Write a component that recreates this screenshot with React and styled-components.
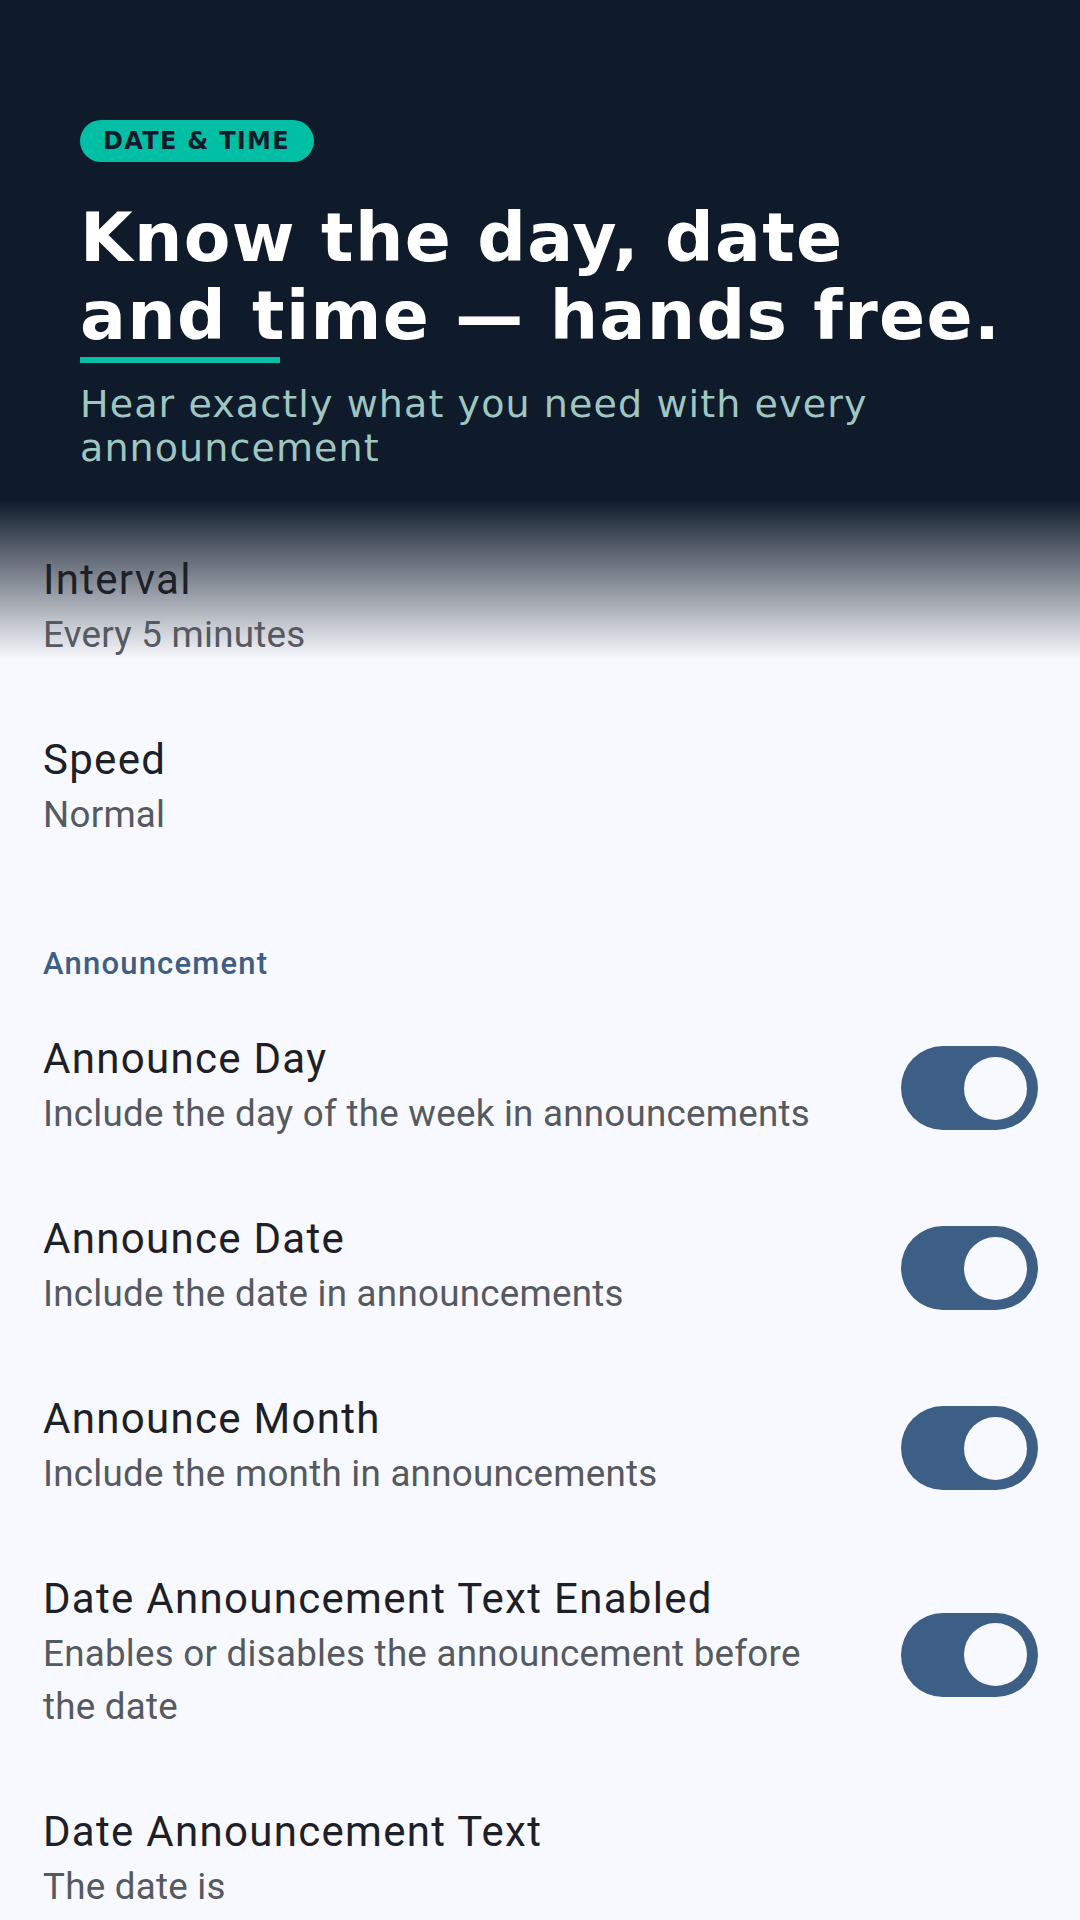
import React, { useState } from "react";
import styled, { createGlobalStyle } from "styled-components";

const GlobalStyle = createGlobalStyle`
  html, body {
    margin: 0;
    padding: 0;
    background: #f8f9fe;
  }
  * {
    box-sizing: border-box;
  }
`;

const Page = styled.div`
  width: 1080px;
  min-height: 1920px;
  background: linear-gradient(
    180deg,
    #0f1b2b 0px,
    #0f1b2b 500px,
    #f8f9fe 660px,
    #f8f9fe 100%
  );
`;

const Hero = styled.header`
  display: flex;
  flex-direction: column;
  align-items: flex-start;
  padding: 120px 36px 46px 80px;
  font-family: "DejaVu Sans", sans-serif;
`;

const Pill = styled.span`
  display: inline-flex;
  align-items: center;
  height: 42px;
  padding: 0 24px 0 23px;
  border-radius: 21px;
  background: #00bfa5;
  color: #0f1b2b;
  font-size: 24px;
  font-weight: 700;
  letter-spacing: 1.3px;
  line-height: 42px;
`;

const Headline = styled.h1`
  margin: 37px 0 0;
  color: #ffffff;
  font-size: 68px;
  font-weight: 700;
  line-height: 78px;
  letter-spacing: 1.35px;
  white-space: nowrap;
`;

const Accent = styled.div`
  width: 200px;
  height: 6px;
  margin-top: 2px;
  background: #00bfa5;
`;

const Subtitle = styled.p`
  max-width: 920px;
  margin: 19px 0 0;
  color: #9fc6c0;
  font-size: 38px;
  line-height: 44px;
  letter-spacing: 1.1px;
`;

const List = styled.section`
  display: flex;
  flex-direction: column;
  font-family: Roboto, "Noto Sans", sans-serif;
`;

const Category = styled.div`
  padding: 68px 43px 11px;
  color: #3e5f85;
  font-size: 31px;
  font-weight: 500;
  line-height: 40px;
  letter-spacing: 1.2px;
`;

const Row = styled.div`
  display: flex;
  align-items: center;
  padding: 35px 42px 34.5px 43px;
`;

const TextCol = styled.div`
  flex: 1;
  min-width: 0;
`;

const Title = styled.div`
  color: #1d2026;
  font-size: 42px;
  line-height: 58px;
  letter-spacing: 1.3px;
`;

const Summary = styled.div`
  color: #555960;
  font-size: 36.75px;
  line-height: 52.5px;
  letter-spacing: 0.25px;
`;

const Track = styled.button`
  flex: none;
  display: flex;
  align-items: center;
  justify-content: ${(p) => (p.on ? "flex-end" : "flex-start")};
  width: 137px;
  height: 84px;
  margin: 6px 0 0 42px;
  padding: 0 11px;
  border: none;
  border-radius: 42px;
  background: ${(p) => (p.on ? "#3e5f85" : "#e0e2ec")};
  cursor: pointer;
`;

const Thumb = styled.span`
  width: 63px;
  height: 63px;
  border-radius: 50%;
  background: #f8f9fe;
`;

function Pref({ title, summary, toggle }) {
  const [on, setOn] = useState(true);
  return (
    <Row>
      <TextCol>
        <Title>{title}</Title>
        <Summary>{summary}</Summary>
      </TextCol>
      {toggle && (
        <Track on={on ? 1 : 0} onClick={() => setOn(!on)}>
          <Thumb />
        </Track>
      )}
    </Row>
  );
}

export default function App() {
  return (
    <Page>
      <GlobalStyle />
      <Hero>
        <Pill>DATE &amp; TIME</Pill>
        <Headline>
          Know the day, date
          <br />
          and time — hands free.
        </Headline>
        <Accent />
        <Subtitle>Hear exactly what you need with every announcement</Subtitle>
      </Hero>
      <List>
        <Pref title="Interval" summary="Every 5 minutes" />
        <Pref title="Speed" summary="Normal" />
        <Category>Announcement</Category>
        <Pref
          title="Announce Day"
          summary="Include the day of the week in announcements"
          toggle
        />
        <Pref
          title="Announce Date"
          summary="Include the date in announcements"
          toggle
        />
        <Pref
          title="Announce Month"
          summary="Include the month in announcements"
          toggle
        />
        <Pref
          title="Date Announcement Text Enabled"
          summary="Enables or disables the announcement before the date"
          toggle
        />
        <Pref title="Date Announcement Text" summary="The date is" />
      </List>
    </Page>
  );
}
